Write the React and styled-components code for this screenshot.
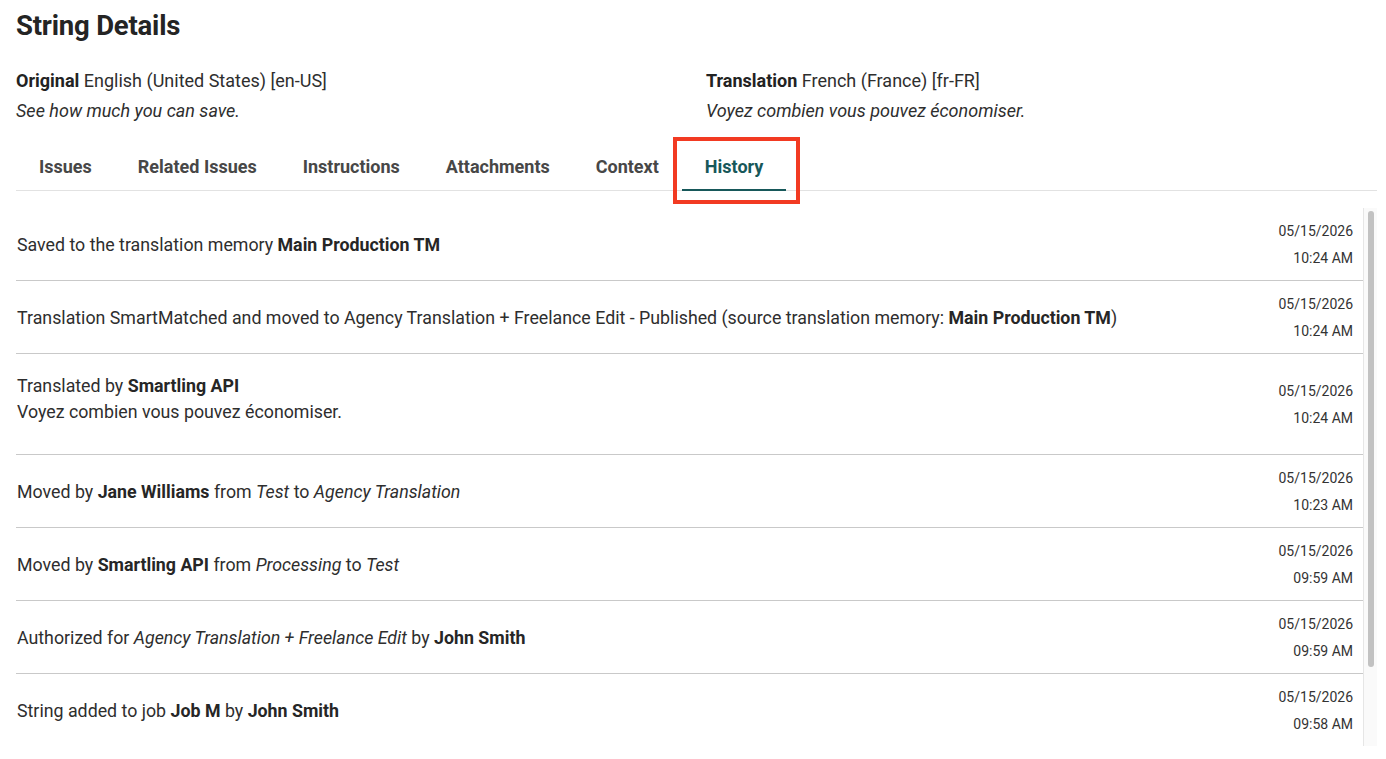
import React from 'react';
import styled, { createGlobalStyle } from 'styled-components';

const GlobalStyle = createGlobalStyle`
    html, body {
        margin: 0;
        padding: 0;
        background: #ffffff;
        overflow: hidden;
    }
    body {
        font-family: Roboto, "Liberation Sans", Arial, sans-serif;
        color: #2e2e2e;
    }
`;

const tabs = ['Issues', 'Related Issues', 'Instructions', 'Attachments', 'Context', 'History'];

const history = [
    {
        text: <>Saved to the translation memory <b>Main Production TM</b></>,
        date: '05/15/2026',
        time: '10:24 AM',
    },
    {
        text: <>Translation SmartMatched and moved to Agency Translation + Freelance Edit - Published (source translation memory: <b>Main Production TM</b>)</>,
        date: '05/15/2026',
        time: '10:24 AM',
    },
    {
        text: <>Translated by <b>Smartling API</b></>,
        translation: 'Voyez combien vous pouvez économiser.',
        date: '05/15/2026',
        time: '10:24 AM',
    },
    {
        text: <>Moved by <b>Jane Williams</b> from <i>Test</i> to <i>Agency Translation</i></>,
        date: '05/15/2026',
        time: '10:23 AM',
    },
    {
        text: <>Moved by <b>Smartling API</b> from <i>Processing</i> to <i>Test</i></>,
        date: '05/15/2026',
        time: '09:59 AM',
    },
    {
        text: <>Authorized for <i>Agency Translation + Freelance Edit</i> by <b>John Smith</b></>,
        date: '05/15/2026',
        time: '09:59 AM',
    },
    {
        text: <>String added to job <b>Job M</b> by <b>John Smith</b></>,
        date: '05/15/2026',
        time: '09:58 AM',
    },
];

const App = () => {
    return (
        <>
            <GlobalStyle />
            <Page>
                <Title>String Details</Title>
                <Languages>
                    <LangBlock>
                        <LangLabel><b>Original</b> English (United States) [en-US]</LangLabel>
                        <LangText>See how much you can save.</LangText>
                    </LangBlock>
                    <LangBlock>
                        <LangLabel><b>Translation</b> French (France) [fr-FR]</LangLabel>
                        <LangText>Voyez combien vous pouvez économiser.</LangText>
                    </LangBlock>
                </Languages>
                <TabBar>
                    {tabs.map((tab) => (
                        <Tab key={tab} $active={tab === 'History'}>
                            {tab}
                            {tab === 'History' && <Highlight />}
                        </Tab>
                    ))}
                </TabBar>
                <ListArea>
                    <HistoryList>
                        {history.map((item, i) => (
                            <Row key={i}>
                                <Message>
                                    <div>{item.text}</div>
                                    {item.translation && <Translation>{item.translation}</Translation>}
                                </Message>
                                <Stamp>
                                    <div>{item.date}</div>
                                    <div>{item.time}</div>
                                </Stamp>
                            </Row>
                        ))}
                    </HistoryList>
                    <ScrollTrack>
                        <ScrollThumb />
                    </ScrollTrack>
                </ListArea>
            </Page>
        </>
    );
};

const Page = styled.div`
    padding: 9px 9px 0 16px;
    box-sizing: border-box;
    height: 100vh;
    display: flex;
    flex-direction: column;
`;

const Title = styled.h1`
    margin: 0;
    font-size: 27.5px;
    font-weight: 700;
    line-height: 34px;
    color: #242424;
    letter-spacing: -0.2px;
`;

const Languages = styled.div`
    display: grid;
    grid-template-columns: 1fr 1fr;
    column-gap: 19px;
    margin-top: 23px;
`;

const LangBlock = styled.div`
    font-size: 18px;
    line-height: 30px;
`;

const LangLabel = styled.div`
    b {
        font-weight: 700;
        color: #222;
    }
`;

const LangText = styled.div`
    font-style: italic;
`;

const TabBar = styled.div`
    display: flex;
    margin-top: 18px;
    border-bottom: 1px solid #e2e2e2;
`;

const Tab = styled.div`
    position: relative;
    padding: 0 23px;
    height: 47px;
    line-height: 45px;
    box-sizing: border-box;
    font-size: 18px;
    font-weight: 700;
    color: ${(p) => (p.$active ? '#17585a' : '#474747')};
    border-bottom: 2px solid ${(p) => (p.$active ? '#17585a' : 'transparent')};
    margin-bottom: -1px;
    cursor: pointer;
`;

const Highlight = styled.span`
    position: absolute;
    left: -9px;
    right: -14px;
    top: -7px;
    bottom: -15px;
    border: 4px solid #f23a22;
    pointer-events: none;
`;

const ListArea = styled.div`
    display: flex;
    margin-top: 17px;
    height: 538px;
`;

const HistoryList = styled.div`
    flex: 1;
    overflow: hidden;
`;

const ScrollTrack = styled.div`
    width: 14px;
    box-sizing: border-box;
    background: #fafafa;
    border-left: 1px solid #e6e6e6;
    padding: 3px 3px 0 4px;
`;

const ScrollThumb = styled.div`
    height: 456px;
    border-radius: 4px;
    background: #c2c2c2;
`;

const Row = styled.div`
    display: flex;
    align-items: center;
    padding: 10px 10px 8px 1px;
    border-bottom: 1px solid #c9c9c9;
    font-size: 17.8px;
    line-height: 26px;

    b {
        font-weight: 700;
        color: #262626;
    }
`;

const Message = styled.div`
    flex: 1;
    padding: 9px 0;
`;

const Translation = styled.div`
    margin-bottom: 12px;
`;

const Stamp = styled.div`
    font-size: 14px;
    line-height: 27px;
    text-align: right;
    color: #333;
    white-space: nowrap;
    margin-left: 20px;
`;

export default App;
